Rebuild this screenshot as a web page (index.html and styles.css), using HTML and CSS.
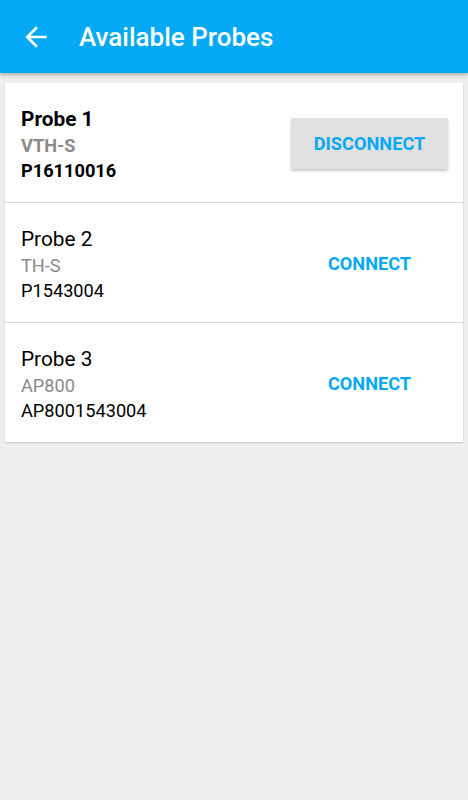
FILE: index.html
```html
<!DOCTYPE html>
<html>
<head>
<meta charset="utf-8">
<link rel="stylesheet" href="styles.css">
</head>
<body>
<header class="appbar">
  <svg class="back" width="32" height="32" viewBox="0 0 24 24"><path fill="#fff" d="M20 11H7.83l5.59-5.59L12 4l-8 8 8 8 1.41-1.41L7.83 13H20v-2z"/></svg>
  <h1 class="title">Available Probes</h1>
</header>
<main class="card">
  <div class="row connected">
    <div class="info">
      <div class="name">Probe 1</div>
      <div class="model">VTH-S</div>
      <div class="serial">P16110016</div>
    </div>
    <button class="btn raised">DISCONNECT</button>
  </div>
  <div class="row">
    <div class="info">
      <div class="name">Probe 2</div>
      <div class="model">TH-S</div>
      <div class="serial">P1543004</div>
    </div>
    <button class="btn">CONNECT</button>
  </div>
  <div class="row">
    <div class="info">
      <div class="name">Probe 3</div>
      <div class="model">AP800</div>
      <div class="serial">AP8001543004</div>
    </div>
    <button class="btn">CONNECT</button>
  </div>
</main>
</body>
</html>
```

FILE: styles.css
```css
html, body {
  margin: 0;
  padding: 0;
}
body {
  background: #eeeeee;
  font-family: Roboto, "Liberation Sans", sans-serif;
  width: 468px;
  min-height: 800px;
}
.appbar {
  height: 73px;
  background: #03a9f4;
  display: flex;
  align-items: center;
  box-shadow: 0 2px 4px rgba(0,0,0,0.28);
  position: relative;
  z-index: 1;
}
.back {
  margin-left: 20px;
  margin-top: 1px;
  flex: none;
}
.title {
  margin: 0 0 0 27px;
  color: #fff;
  font-size: 26px;
  font-weight: 500;
  line-height: 1;
}
.card {
  margin: 10px 5px 0 5px;
  background: #fff;
  box-shadow: 0 1px 1.5px rgba(0,0,0,0.18);
}
.row {
  height: 120px;
  box-sizing: border-box;
  border-bottom: 1px solid #dcdcdc;
  display: flex;
  align-items: center;
  padding: 1px 15px 0 16px;
}
.row:last-child {
  border-bottom: none;
  height: 119px;
}
.info {
  flex: 1;
  padding-top: 2px;
}
.name {
  font-size: 20.8px;
  line-height: 28.7px;
  color: #000;
}
.model {
  font-size: 18.2px;
  line-height: 25px;
  color: #8a8a8a;
}
.serial {
  font-size: 18.2px;
  line-height: 25px;
  color: #000;
}
.connected .name,
.connected .model,
.connected .serial {
  font-weight: 700;
}
.btn {
  width: 157px;
  height: 51px;
  border: none;
  background: transparent;
  color: #03a9f4;
  font-family: Roboto, "Liberation Sans", sans-serif;
  font-size: 18.2px;
  font-weight: 700;
  padding: 0;
  border-radius: 2px;
}
.raised {
  background: #e0e0e0;
  box-shadow: 0 2px 3px rgba(0,0,0,0.22);
}
```
